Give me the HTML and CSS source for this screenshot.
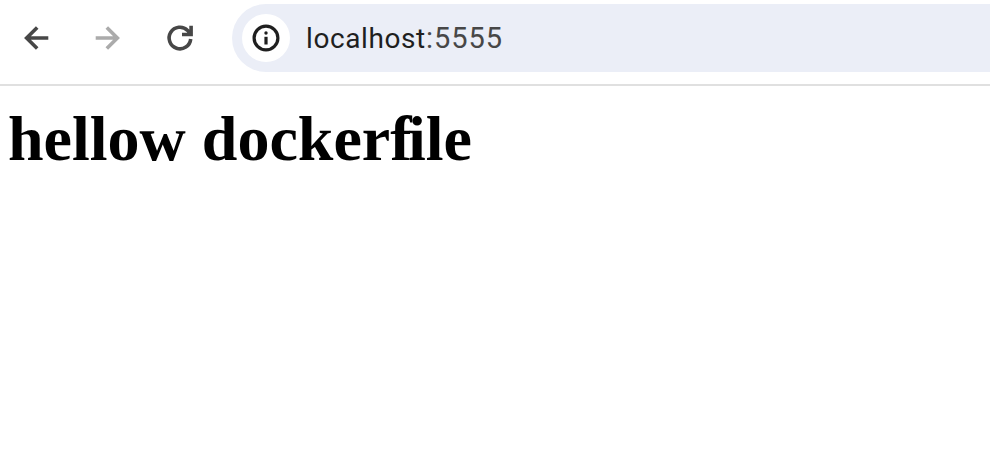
FILE: index.html
```html
<!DOCTYPE html>
<html lang="en">
<head>
<meta charset="utf-8">
<title>localhost:5555</title>
<link rel="stylesheet" href="styles.css">
</head>
<body>
<header class="toolbar">
  <nav class="nav">
    <svg class="icon" viewBox="0 0 32 32"><path d="M28.3 16H7M17.2 5.4L6.6 16L17.2 26.6"/></svg>
    <svg class="icon icon-disabled" viewBox="0 0 32 32"><path d="M3.7 16H25M14.8 5.4L25.4 16L14.8 26.6"/></svg>
    <svg class="icon" viewBox="0 0 32 32"><path d="M26.7 17A10.8 10.8 0 1 1 23.6 8.4L26.5 11.8M27.1 3.8V12.5H18"/></svg>
  </nav>
  <div class="address">
    <span class="info"><svg class="info-icon" viewBox="0 0 28 28"><circle cx="14" cy="14" r="11.9"/><path d="M14 12.8V20.5"/><circle class="info-dot" cx="14" cy="9" r="1.7"/></svg></span>
    <span class="url">localhost<span class="port">:5555</span></span>
  </div>
</header>
<main><h1 class="title">hellow docker<span class="tight">f</span>ile</h1></main>
</body>
</html>
```

FILE: styles.css
```css
body { margin: 0; background: #fff; color: #000; overflow: hidden; }
.toolbar { display: flex; height: 86px; box-sizing: border-box; padding-top: 4px; border-bottom: 2px solid #e0e0e0; }
.nav { display: flex; align-items: center; gap: 40px; width: 232px; height: 68px; padding-left: 20px; box-sizing: border-box; }
.icon { width: 32px; height: 32px; fill: none; stroke: #474747; stroke-width: 3.6; }
.icon-disabled { stroke: #ababab; }
.address { display: flex; align-items: center; flex: 1; height: 68px; padding-left: 10px; box-sizing: border-box; border-radius: 34px 0 0 34px; background: #ebeef7; }
.info { display: flex; align-items: center; justify-content: center; width: 48px; height: 48px; border-radius: 50%; background: #fff; }
.info-icon { width: 28px; height: 28px; fill: none; stroke: #1f1f1f; stroke-width: 3.2; }
.info-dot { fill: #1f1f1f; stroke: none; }
.url { margin-left: 16px; font: 28px/34px Roboto, sans-serif; letter-spacing: 0.6px; color: #1f1f1f; }
.port { font-size: 29px; letter-spacing: 1px; color: #474747; }
.title { margin: 16px 8px; font: bold 64px/74px "Liberation Serif", serif; }
.tight { letter-spacing: -3.5px; }
```
